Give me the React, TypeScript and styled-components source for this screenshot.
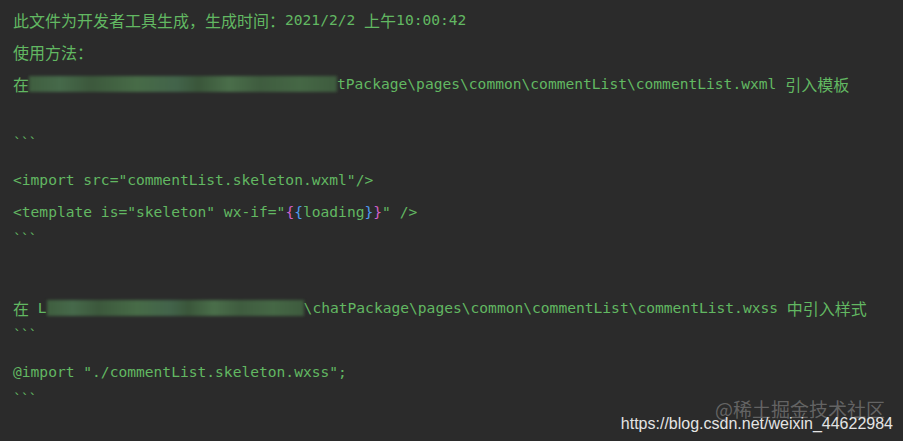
import React from "react";
import styled, { createGlobalStyle } from "styled-components";

const GlobalStyle = createGlobalStyle`
  html, body {
    margin: 0;
    padding: 0;
    background: #2b2b2b;
  }
`;

const Page = styled.div`
  position: relative;
  width: 903px;
  height: 441px;
  overflow: hidden;
  background: #2b2b2b;
  padding: 4px 0 0 13px;
  box-sizing: border-box;
  font-family: "DejaVu Sans Mono", "Liberation Mono", monospace;
  font-size: 14.6px;
  color: #62b862;
`;

const Line = styled.div`
  height: 32px;
  line-height: 32px;
  white-space: pre;
  display: flex;
  align-items: center;
`;

const Cjk = styled.span`
  font-family: "Noto Sans CJK SC", sans-serif;
  font-size: 16px;
`;

const Brace = styled.span<{ $tone: "pink" | "blue" }>`
  color: ${({ $tone }) => ($tone === "pink" ? "#d25fc9" : "#4f9cf0")};
`;

const Ticks = styled.span`
  position: relative;
  top: -5px;
  letter-spacing: -1px;
`;

const Blurred = styled.span<{ $w: number }>`
  display: inline-block;
  width: ${({ $w }) => $w}px;
  height: 16px;
  filter: blur(1.5px);
  background: linear-gradient(
    90deg,
    #3f5e3f 0%,
    #46694a 10%,
    #3c583c 20%,
    #476b47 35%,
    #42634a 48%,
    #3a563a 55%,
    #4a6e4a 65%,
    #3f5c3f 75%,
    #456745 88%,
    #3e5b3e 100%
  );
`;

const Watermark = styled.div`
  position: absolute;
  right: 10px;
  bottom: 8px;
  font-family: "Liberation Sans", Arial, sans-serif;
  font-size: 16px;
  color: #e4e4e4;
`;

const Juejin = styled.div`
  position: absolute;
  right: 18px;
  bottom: 19px;
  font-family: "Noto Sans CJK SC", sans-serif;
  font-size: 19px;
  color: rgba(150, 150, 150, 0.55);
`;

export default function App() {
  return (
    <>
      <GlobalStyle />
      <Page>
        <Line>
          <Cjk>此文件为开发者工具生成，生成时间：</Cjk>2021/2/2 <Cjk>上午</Cjk>10:00:42
        </Line>
        <Line>
          <Cjk>使用方法：</Cjk>
        </Line>
        <Line>
          <Cjk>在</Cjk>
          <Blurred $w={308} />
          tPackage\pages\common\commentList\commentList.wxml <Cjk>引入模板</Cjk>
        </Line>
        <Line />
        <Line>
          <Ticks>```</Ticks>
        </Line>
        <Line>{'<import src="commentList.skeleton.wxml"/>'}</Line>
        <Line>
          {'<template is="skeleton" wx-if="'}
          <Brace $tone="pink">{"{"}</Brace>
          <Brace $tone="blue">{"{"}</Brace>
          loading
          <Brace $tone="blue">{"}"}</Brace>
          <Brace $tone="pink">{"}"}</Brace>
          {'" />'}
        </Line>
        <Line>
          <Ticks>```</Ticks>
        </Line>
        <Line />
        <Line>
          <Cjk>在</Cjk> L<Blurred $w={257} />
          \chatPackage\pages\common\commentList\commentList.wxss <Cjk>中引入样式</Cjk>
        </Line>
        <Line>
          <Ticks>```</Ticks>
        </Line>
        <Line>@import "./commentList.skeleton.wxss";</Line>
        <Line>
          <Ticks>```</Ticks>
        </Line>
        <Juejin>@稀土掘金技术社区</Juejin>
        <Watermark>https://blog.csdn.net/weixin_44622984</Watermark>
      </Page>
    </>
  );
}
